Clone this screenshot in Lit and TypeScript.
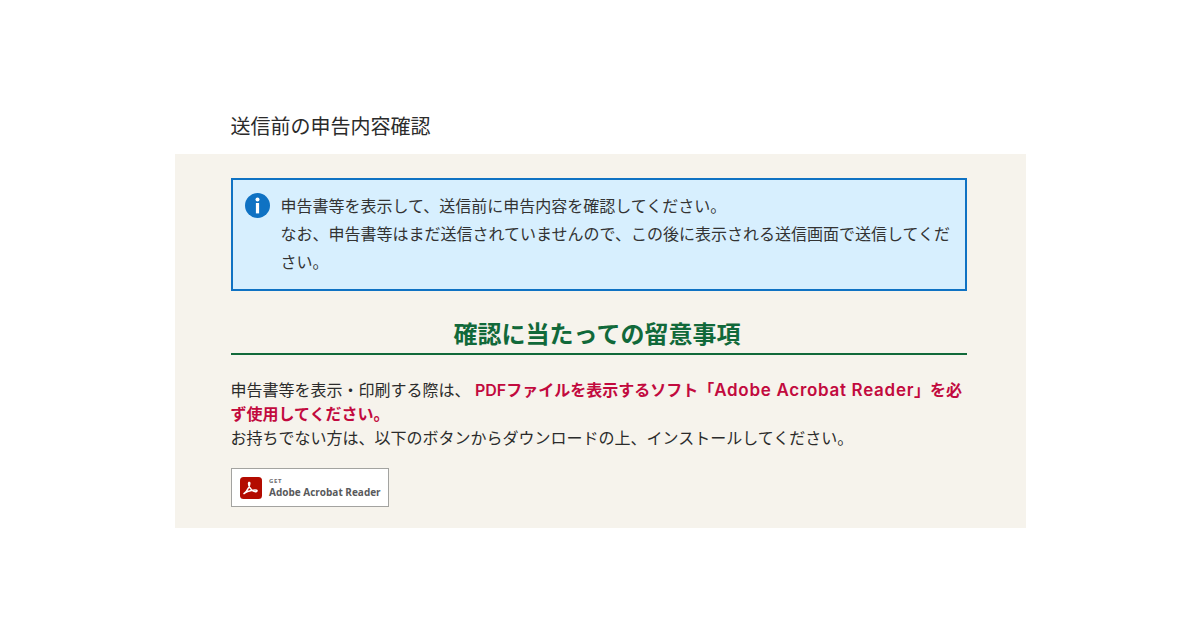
import { LitElement, html, css } from "lit";
import { customElement } from "lit/decorators.js";

@customElement("app-root")
export class AppRoot extends LitElement {
  static styles = css`
    :host {
      display: block;
      width: 1200px;
      height: 630px;
      background: #fff;
      overflow: hidden;
      font-family: "Liberation Sans", "Noto Sans CJK JP", sans-serif;
      color: #333;
    }
    .page {
      width: 851px;
      margin: 0 0 0 175px;
      padding: 112px 0 0 0;
    }
    h1 {
      margin: 0 0 0 -0.5px;
      padding: 0 56px;
      font-size: 20px;
      line-height: 30px;
      height: 42px;
      font-weight: 400;
      color: #2b2b2b;
    }
    .panel {
      background: #f6f3ec;
      padding: 24px 59px 21px 56px;
      height: 374px;
      box-sizing: border-box;
    }
    .info {
      display: flex;
      gap: 11px;
      box-sizing: border-box;
      height: 113px;
      border: 2px solid #0f72c3;
      background: #d7effe;
      padding: 13px 10px 0 12px;
      font-size: 16px;
      line-height: 28px;
      color: #333;
    }
    .info svg {
      flex: none;
      width: 25px;
      height: 25px;
      margin-top: 0;
    }
    .info p { margin: 0 0 0 -0.5px; }
    h2 {
      margin: 26px 0 0;
      padding-right: 4px;
      height: 38px;
      box-sizing: border-box;
      border-bottom: 2px solid #11693a;
      text-align: center;
      font-size: 24px;
      line-height: 36px;
      font-weight: 700;
      color: #11693a;
    }
    .note {
      margin: 24px 0 0 -0.5px;
      font-size: 16px;
      line-height: 24px;
      color: #2b2b2b;
    }
    .note strong {
      color: #c20a3e;
      font-weight: 600;
      line-height: 1;
      font-family: "Inter", "Noto Sans CJK JP", sans-serif;
    }
    .latin { font-size: 17px; letter-spacing: 0.7px; line-height: 1; }
    .badge {
      display: flex;
      align-items: center;
      gap: 7px;
      box-sizing: border-box;
      width: 158px;
      height: 39px;
      margin-top: 17px;
      padding: 0 6px 0 8px;
      background: #fff;
      border: 1px solid #a3a3a0;
      font-family: "Open Sans", "Liberation Sans", sans-serif;
      color: #58595b;
    }
    .badge svg { flex: none; width: 22px; height: 22px; }
    .badge-text { display: flex; flex-direction: column; }
    .get { font-size: 6px; line-height: 8px; font-weight: 700; letter-spacing: 0.7px; color: #6d6e70; }
    .name { font-size: 10px; line-height: 14px; font-weight: 700; white-space: nowrap; }
  `;

  render() {
    return html`
      <div class="page">
        <h1>送信前の申告内容確認</h1>
        <section class="panel">
          <div class="info">
            <svg viewBox="0 0 25 25" aria-hidden="true">
              <circle cx="12.5" cy="12.5" r="12.5" fill="#0f72c3"></circle>
              <circle cx="12.5" cy="6.6" r="2" fill="#fff"></circle>
              <rect x="10.9" y="10" width="3.2" height="10.4" fill="#fff"></rect>
            </svg>
            <p>申告書等を表示して、送信前に申告内容を確認してください。<br />なお、申告書等はまだ送信されていませんので、この後に表示される送信画面で送信してください。</p>
          </div>
          <h2>確認に当たっての留意事項</h2>
          <p class="note">申告書等を表示・印刷する際は、 <strong>PDFファイルを表示するソフト「<span class="latin">Adobe Acrobat Reader</span>」を必ず使用してください。</strong><br />お持ちでない方は、以下のボタンからダウンロードの上、インストールしてください。</p>
          <div class="badge">
            <svg viewBox="0 0 22 22" aria-hidden="true">
              <rect width="22" height="22" rx="3.5" fill="#b30b00"></rect>
              <path d="M4 16.600c1.600-1 3.200-3.200 4.600-6 .7-1.500 1.100-3 1.200-4.200.1-1-.8-1.300-1.100-.5-.4 1.100.2 3 1.200 4.700 1.100 1.900 2.500 3.300 4 3.800 1.300.4 2.800.2 3.100-.5.2-.6-.6-1-2-1-2.100 0-5.100.7-7.400 1.600-1.700.7-3 1.500-3.600 2.100z" fill="none" stroke="#fff" stroke-width="1.500" stroke-linejoin="round"></path>
            </svg>
            <div class="badge-text">
              <span class="get">GET</span>
              <span class="name">Adobe Acrobat Reader</span>
            </div>
          </div>
        </section>
      </div>
    `;
  }
}
